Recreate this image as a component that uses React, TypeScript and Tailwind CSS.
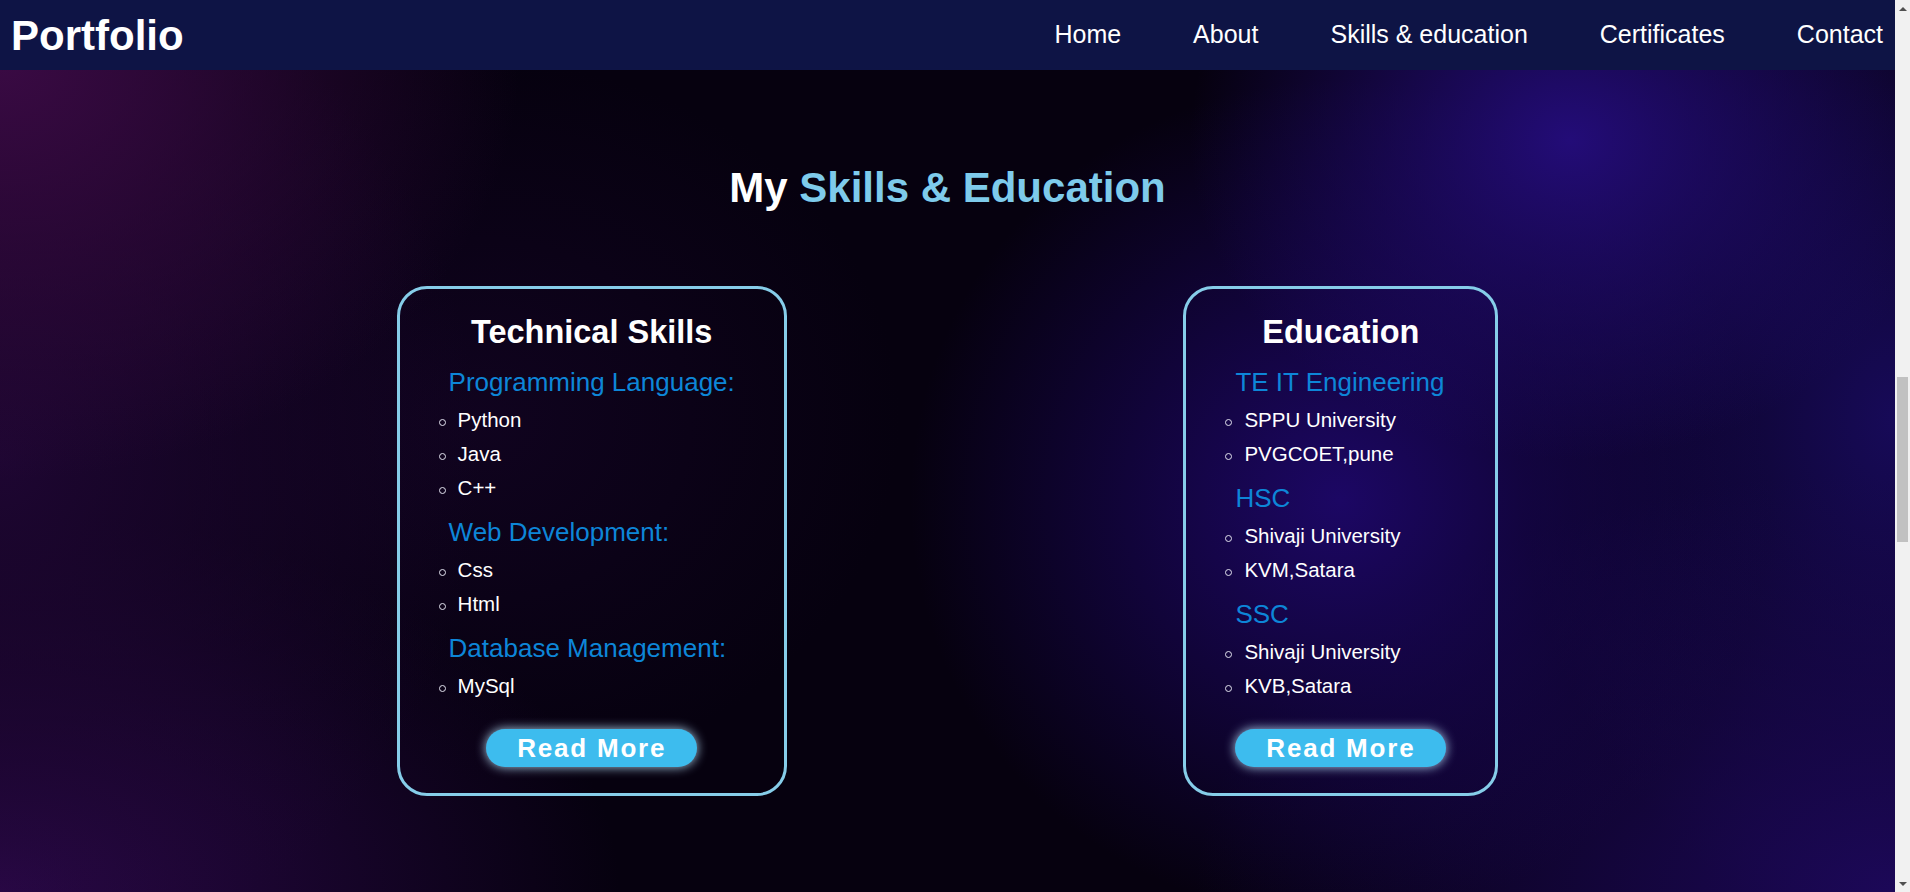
import React from 'react';

type Group = { heading: string; items: string[] };

const skills: Group[] = [
  { heading: 'Programming Language:', items: ['Python', 'Java', 'C++'] },
  { heading: 'Web Development:', items: ['Css', 'Html'] },
  { heading: 'Database Management:', items: ['MySql'] },
];

const education: Group[] = [
  { heading: 'TE IT Engineering', items: ['SPPU University', 'PVGCOET,pune'] },
  { heading: 'HSC', items: ['Shivaji University', 'KVM,Satara'] },
  { heading: 'SSC', items: ['Shivaji University', 'KVB,Satara'] },
];

const navLinks = ['Home', 'About', 'Skills & education', 'Certificates', 'Contact'];

const Card: React.FC<{ title: string; groups: Group[] }> = ({ title, groups }) => {
  return (
    <div className="flex flex-col rounded-[30px] border-[3px] border-[#86cde9] px-[49px] pt-[24px] pb-[26px]">
      <h3 className="mb-[16px] text-center text-[32.5px] font-bold leading-[38px] text-white">{title}</h3>
      {groups.map((g, i) => (
        <div key={g.heading} className={i > 0 ? 'mt-[12px]' : ''}>
          <h4 className="whitespace-nowrap text-[26px] leading-[30px] text-[#0d86d8]">{g.heading}</h4>
          <ul className="mt-[6px]">
            {g.items.map((item) => (
              <li key={item} className="ml-[-10px] flex h-[34px] items-start whitespace-nowrap text-[20.5px] leading-[34px] text-white">
                <span className="mt-[16px] mr-[12px] h-[7px] w-[7px] shrink-0 rounded-full border border-[#e2e2ee]" />
                {item}
              </li>
            ))}
          </ul>
        </div>
      ))}
      <button className="mt-[26px] h-[38px] w-[211px] self-center rounded-full bg-[#3dbcee] text-center text-[26px] font-bold leading-[38px] tracking-[1.8px] text-white shadow-[0_0_11px_rgba(190,230,255,0.9)]">
        Read More
      </button>
    </div>
  );
};

const App: React.FC = () => {
  return (
    <div className="flex h-[892px] w-full overflow-hidden font-['Liberation_Sans',Arial,sans-serif]">
      <div className="flex min-w-0 flex-1 flex-col [background:radial-gradient(ellipse_380px_320px_at_1570px_140px,#230c78,transparent),radial-gradient(ellipse_430px_420px_at_1340px_500px,#1c0764,transparent),radial-gradient(ellipse_520px_420px_at_0px_60px,#3a0a44,transparent),radial-gradient(ellipse_480px_520px_at_0px_460px,#1e0632,transparent),radial-gradient(ellipse_420px_360px_at_480px_420px,#10031f,transparent),radial-gradient(ellipse_620px_380px_at_0px_892px,#2a0848,transparent),radial-gradient(ellipse_700px_420px_at_1895px_892px,#1c0858,transparent),radial-gradient(ellipse_380px_520px_at_1895px_420px,#170a58,transparent),#06010f]">
        <nav className="flex h-[70px] shrink-0 items-center justify-between bg-[#0e1445] pl-[11px] pr-[12px]">
          <h1 className="text-[42px] font-bold text-white">Portfolio</h1>
          <ul className="flex gap-[72px] text-[25px] text-white">
            {navLinks.map((l) => (
              <li key={l}>{l}</li>
            ))}
          </ul>
        </nav>
        <section className="pt-[93.5px]">
          <h2 className="text-center text-[42px] font-bold leading-[48px] text-white">
            My <span className="text-[#7ecbeb]">Skills &amp; Education</span>
          </h2>
          <div className="mt-[74.5px] flex items-start justify-evenly">
            <Card title="Technical Skills" groups={skills} />
            <Card title="Education" groups={education} />
          </div>
        </section>
      </div>
      {/* scrollbar */}
      <div className="flex w-[15px] shrink-0 flex-col bg-[#f1f1f1]">
        <div className="flex h-[17px] items-center justify-center">
          <div className="h-0 w-0 border-x-[4px] border-b-[4px] border-x-transparent border-b-[#505050]" />
        </div>
        <div className="h-[360px]" />
        <div className="ml-[2px] h-[165px] w-[11px] bg-[#c1c1c1]" />
        <div className="flex-1" />
        <div className="flex h-[17px] items-center justify-center">
          <div className="h-0 w-0 border-x-[4px] border-t-[4px] border-x-transparent border-t-[#505050]" />
        </div>
      </div>
    </div>
  );
};

export default App;
